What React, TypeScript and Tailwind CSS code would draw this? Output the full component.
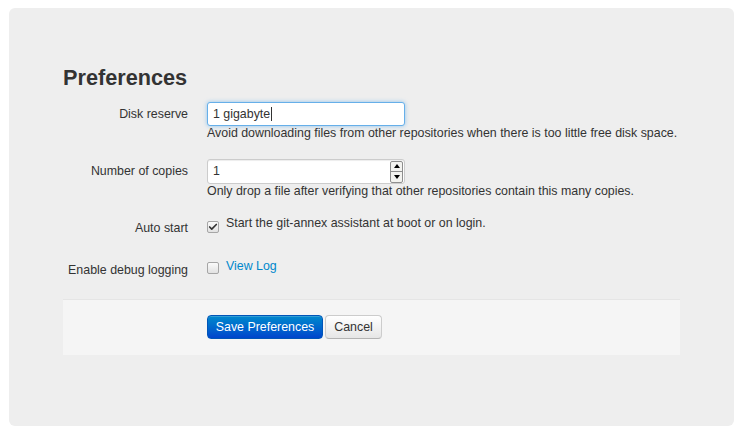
import { Check } from 'lucide-react'

function Checkbox({ checked }: { checked?: boolean }) {
    return (
        <span className="flex h-[12px] w-[12px] shrink-0 items-center justify-center rounded-[2px] border border-[#a6a6a6] bg-gradient-to-b from-[#fafafa] to-[#e2e2e2]">
            {checked && <Check size={10} strokeWidth={4} color="#333" />}
        </span>
    )
}

export default function App() {
    return (
        <div className="min-h-screen bg-white pl-[9px] pr-[8px] pt-[8px] font-['Liberation_Sans',Arial,sans-serif] text-[12.4px] text-[#333]">
            <div className="h-[418px] rounded-[6px] bg-[#eeeeee] pl-[54px] pt-[55px]">
                <h2 className="text-[21.7px] font-bold leading-[30px] text-[#333]">Preferences</h2>

                <form className="w-[617px]">
                    {/* disk reserve */}
                    <div className="mt-[9px] flex">
                        <label className="w-[125px] text-right leading-[24px]">Disk reserve</label>
                        <div className="ml-[19px]">
                            <div className="flex h-[24px] w-[198px] items-center rounded-[3px] border border-[#66afe9] bg-white px-[5px] shadow-[0_0_4px_rgba(82,168,236,0.6)]">
                                <span>1 gigabyte</span>
                                <span className="ml-[1px] h-[14px] w-px bg-[#333]"></span>
                            </div>
                            <p className="leading-[14px]">Avoid downloading files from other repositories when there is too little free disk space.</p>
                        </div>
                    </div>

                    {/* number of copies */}
                    <div className="mt-[19px] flex">
                        <label className="w-[125px] text-right leading-[25px]">Number of copies</label>
                        <div className="ml-[19px]">
                            <div className="flex h-[25px] w-[198px] items-center rounded-[3px] border border-[#cccccc] bg-white pl-[5px] pr-[1px] shadow-[inset_0_1px_1px_rgba(0,0,0,0.075)]">
                                <span className="flex-1">1</span>
                                <div className="flex h-[22px] w-[13px] flex-col overflow-hidden rounded-[2px] border border-[#8e8e8e] bg-[#f3f3f0]">
                                    <div className="flex flex-1 items-center justify-center border-b border-[#8e8e8e]">
                                        <span className="h-0 w-0 border-x-[3.5px] border-b-[4px] border-x-transparent border-b-black"></span>
                                    </div>
                                    <div className="flex flex-1 items-center justify-center">
                                        <span className="h-0 w-0 border-x-[3.5px] border-t-[4px] border-x-transparent border-t-black"></span>
                                    </div>
                                </div>
                            </div>
                            <p className="leading-[14px]">Only drop a file after verifying that other repositories contain this many copies.</p>
                        </div>
                    </div>

                    {/* auto start */}
                    <div className="mt-[17px] flex">
                        <label className="w-[125px] pt-[5px] text-right leading-[16px]">Auto start</label>
                        <div className="ml-[19px] flex items-start gap-[7px] leading-[16px]">
                            <span className="mt-[6px]"><Checkbox checked /></span>
                            <span>Start the git-annex assistant at boot or on login.</span>
                        </div>
                    </div>

                    {/* debug logging */}
                    <div className="mt-[22px] flex">
                        <label className="w-[125px] pt-[4px] text-right leading-[16px]">Enable debug logging</label>
                        <div className="ml-[19px] flex items-start gap-[7px] leading-[16px]">
                            <span className="mt-[4px]"><Checkbox /></span>
                            <a href="#" className="text-[#0088cc]">View Log</a>
                        </div>
                    </div>

                    <div className="mt-[21px] border-t border-[#e5e5e5] bg-[#f5f5f5] pb-[16px] pl-[144px] pt-[15px]">
                        <div className="flex gap-[2px]">
                            <button type="button" className="h-[24px] w-[116px] rounded-[4px] border border-[#0055b8] bg-gradient-to-b from-[#0088cc] to-[#0044cc] text-[12.4px] text-white shadow-[inset_0_1px_0_rgba(255,255,255,0.2)]">Save Preferences</button>
                            <button type="button" className="h-[24px] w-[57px] rounded-[4px] border border-[#cccccc] border-b-[#b3b3b3] bg-gradient-to-b from-white to-[#e6e6e6] text-[12.4px] text-[#333]">Cancel</button>
                        </div>
                    </div>
                </form>
            </div>
        </div>
    )
}
